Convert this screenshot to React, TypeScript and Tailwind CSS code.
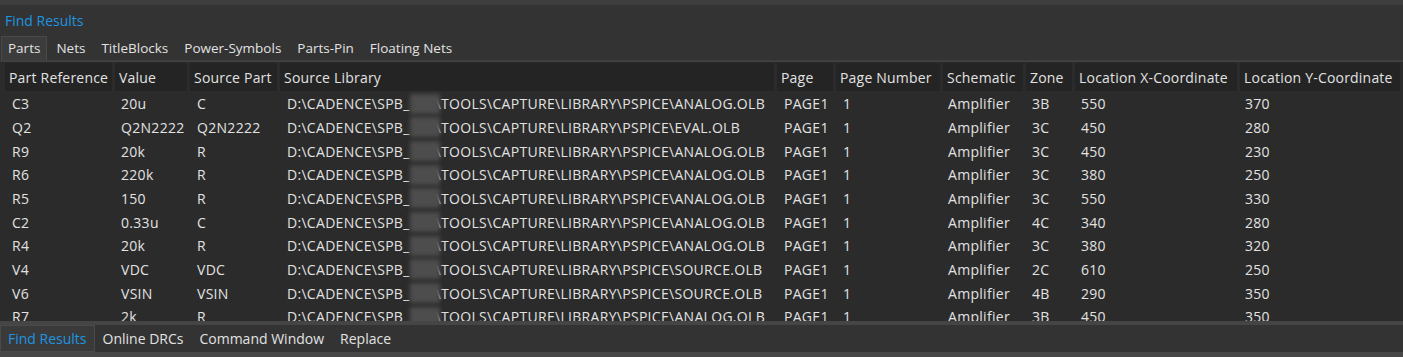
import React from 'react';

const COLS = 'grid-cols-[110px_75px_90px_497px_59px_107px_83px_49px_165px_1fr]';

const HEADERS = [
  'Part Reference',
  'Value',
  'Source Part',
  'Source Library',
  'Page',
  'Page Number',
  'Schematic',
  'Zone',
  'Location X-Coordinate',
  'Location Y-Coordinate',
];

const ROWS = [
  ['C3', '20u', 'C', 'ANALOG.OLB', '3B', '550', '370'],
  ['Q2', 'Q2N2222', 'Q2N2222', 'EVAL.OLB', '3C', '450', '280'],
  ['R9', '20k', 'R', 'ANALOG.OLB', '3C', '450', '230'],
  ['R6', '220k', 'R', 'ANALOG.OLB', '3C', '380', '250'],
  ['R5', '150', 'R', 'ANALOG.OLB', '3C', '550', '330'],
  ['C2', '0.33u', 'C', 'ANALOG.OLB', '4C', '340', '280'],
  ['R4', '20k', 'R', 'ANALOG.OLB', '3C', '380', '320'],
  ['V4', 'VDC', 'VDC', 'SOURCE.OLB', '2C', '610', '250'],
  ['V6', 'VSIN', 'VSIN', 'SOURCE.OLB', '4B', '290', '350'],
  ['R7', '2k', 'R', 'ANALOG.OLB', '3B', '450', '350'],
];

const TOP_TABS = ['Parts', 'Nets', 'TitleBlocks', 'Power-Symbols', 'Parts-Pin', 'Floating Nets'];
const BOTTOM_TABS = ['Find Results', 'Online DRCs', 'Command Window', 'Replace'];

const LibPath = ({ file }: { file: string }) => (
  <span className="flex items-center whitespace-nowrap">
    D:\CADENCE\SPB_
    <span className="inline-block w-[30px] h-[20px] bg-[#4d4d4d] blur-[2px] -mr-[4px]" />
    {'\\TOOLS\\CAPTURE\\LIBRARY\\PSPICE\\' + file}
  </span>
);

export default function App() {
  return (
    <div
      className="w-[1403px] h-[357px] flex flex-col bg-[#333333] text-[#e2e2e2] text-[14px] overflow-hidden"
      style={{ fontFamily: '"Open Sans", "Noto Sans", sans-serif' }}
    >
      <div className="h-[5px] bg-[#3e3e3e]" />
      <div className="h-[31px] flex items-center pl-[5px] text-[#1e95e0]">Find Results</div>

      <div className="h-[24px] flex items-stretch pl-[1px] text-[13.5px]">
        {TOP_TABS.map((t, i) => (
          <div
            key={t}
            className={
              i === 0
                ? 'px-[6px] mr-[1px] flex items-center bg-[#3c3c3c] border border-b-0 border-[#4a4a4a]'
                : 'px-[8px] flex items-center'
            }
          >
            {t}
          </div>
        ))}
      </div>
      <div className="h-[2px] bg-[#3f3f3f]" />

      <div className="h-[259px] bg-[#2b2b2b] overflow-hidden">
        <div className={`grid ${COLS} h-[28px] mt-[1px] ml-[5px]`}>
          {HEADERS.map((h) => (
            <div
              key={h}
              className="mr-[3px] bg-[#242424] flex items-center pl-[4px] whitespace-nowrap overflow-hidden tracking-[0.2px]"
            >
              {h}
            </div>
          ))}
        </div>
        <div className="mt-[1px] tracking-[0.3px]">
          {ROWS.map((r) => (
            <div key={r[0]} className={`grid ${COLS} h-[23.67px] ml-[5px] items-center whitespace-nowrap`}>
              <div className="pl-[7px]">{r[0]}</div>
              <div className="pl-[6px]">{r[1]}</div>
              <div className="pl-[7px]">{r[2]}</div>
              <div className="pl-[7px]">
                <LibPath file={r[3]} />
              </div>
              <div className="pl-[7px]">PAGE1</div>
              <div className="pl-[7px]">1</div>
              <div className="pl-[5px]">Amplifier</div>
              <div className="pl-[6px]">{r[4]}</div>
              <div className="pl-[6px]">{r[5]}</div>
              <div className="pl-[5px]">{r[6]}</div>
            </div>
          ))}
        </div>
      </div>

      <div className="h-[4px] bg-[#454545]" />
      <div className="h-[27px] flex items-stretch">
        {BOTTOM_TABS.map((t, i) => (
          <div
            key={t}
            className={
              i === 0
                ? 'px-[7px] flex items-center bg-[#3a3a3a] border border-[#4a4a4a] text-[#1e95e0]'
                : 'px-[8px] flex items-center'
            }
          >
            {t}
          </div>
        ))}
      </div>
      <div className="h-[5px] bg-[#474747]" />
    </div>
  );
}
